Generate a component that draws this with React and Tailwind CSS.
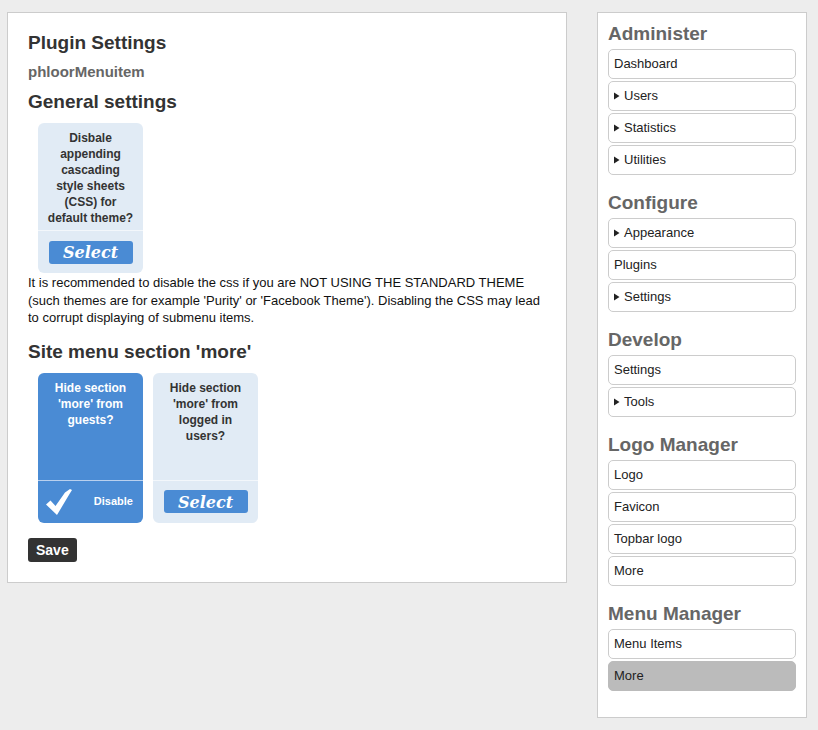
import React from "react";

const font = { fontFamily: '"Liberation Sans", Arial, sans-serif' };

function Tri() {
  return (
    <svg width="6" height="8" viewBox="0 0 6 8" className="mr-[4px] shrink-0">
      <path d="M0 0.5 L5.5 4 L0 7.5 Z" fill="#222" />
    </svg>
  );
}

function Check() {
  return (
    <svg width="26" height="26" viewBox="0 0 26 26">
      <path d="M0 15.5 L4.5 11.5 L9.5 17 L19 3.5 L24 0 L26 1 L23.5 5 L11 26 Z" fill="#fff" />
    </svg>
  );
}

function SelectBtn() {
  return (
    <div
      className="w-[84px] h-[23px] pt-[2px] rounded-[3px] bg-[#4a8bd4] flex items-center justify-center text-white text-[16px] font-bold italic leading-none"
      style={{ fontFamily: '"DejaVu Serif", Georgia, serif' }}
    >
      Select
    </div>
  );
}

function Card({ text, selected }) {
  return (
    <div
      className={
        "w-[105px] h-[150px] rounded-[6px] flex flex-col " +
        (selected ? "bg-[#4a8bd4] text-white" : "bg-[#e1ebf5] text-[#333]")
      }
    >
      <div className="h-[107px] px-[9px] pt-[7px] text-center text-[12px] font-bold leading-[16px]">
        {text}
      </div>
      <div
        className={
          "flex-1 border-t " +
          (selected ? "border-[#b9d0ee]" : "border-[#f3f7fb]")
        }
      >
        {selected ? (
          <div className="h-full flex items-center justify-between pl-[8px] pr-[10px]">
            <Check />
            <span className="text-[11px] font-bold">Disable</span>
          </div>
        ) : (
          <div className="h-full flex items-center justify-center">
            <SelectBtn />
          </div>
        )}
      </div>
    </div>
  );
}

function Item({ label, arrow, active }) {
  return (
    <div
      className={
        "h-[30px] rounded-[5px] border flex items-center pl-[5px] text-[13px] text-[#222] " +
        (active ? "bg-[#bbbbbb] border-[#bbbbbb]" : "bg-white border-[#cccccc]")
      }
    >
      {arrow && <Tri />}
      {label}
    </div>
  );
}

function Section({ title, items, first }) {
  return (
    <div className={first ? "" : "mt-[17px]"}>
      <div className="text-[19px] leading-[22px] font-bold text-[#666] mb-[4px]">{title}</div>
      <div className="flex flex-col gap-[2px]">
        {items.map((it, i) => (
          <Item key={i} {...it} />
        ))}
      </div>
    </div>
  );
}

export default function App() {
  return (
    <div className="min-h-[730px] bg-[#ededed] pl-[7px] pt-[12px] flex items-start gap-[30px]" style={font}>
      <div className="w-[560px] h-[571px] bg-white border border-[#cccccc] px-[20px] pt-[19px]">
        <h1 className="text-[19px] leading-[22px] font-bold text-[#333]">Plugin Settings</h1>
        <div className="mt-[9px] text-[15px] leading-[18px] font-bold text-[#666]">phloorMenuitem</div>
        <h2 className="mt-[10px] text-[19px] leading-[22px] font-bold text-[#333]">General settings</h2>
        <div className="mt-[10px] pl-[10px] flex gap-[10px]">
          <Card text="Disbale appending cascading style sheets (CSS) for default theme?" />
        </div>
        <p className="mt-[1px] text-[13px] leading-[17.5px] text-[#111]">
          It is recommended to disable the css if you are NOT USING THE STANDARD THEME (such themes are for example 'Purity' or 'Facebook Theme'). Disabling the CSS may lead to corrupt displaying of submenu items.
        </p>
        <h2 className="mt-[14px] text-[19px] leading-[22px] font-bold text-[#333]">Site menu section 'more'</h2>
        <div className="mt-[10px] pl-[10px] flex gap-[10px]">
          <Card text="Hide section 'more' from guests?" selected />
          <Card text="Hide section 'more' from logged in users?" />
        </div>
        <button className="mt-[15px] h-[24px] px-[8px] rounded-[3px] bg-[#333] text-white text-[14px] font-bold leading-none">
          Save
        </button>
      </div>
      <div className="w-[210px] bg-white border border-[#cccccc] px-[10px] pt-[10px] pb-[26px]">
        <Section
          first
          title="Administer"
          items={[
            { label: "Dashboard" },
            { label: "Users", arrow: true },
            { label: "Statistics", arrow: true },
            { label: "Utilities", arrow: true },
          ]}
        />
        <Section
          title="Configure"
          items={[
            { label: "Appearance", arrow: true },
            { label: "Plugins" },
            { label: "Settings", arrow: true },
          ]}
        />
        <Section
          title="Develop"
          items={[{ label: "Settings" }, { label: "Tools", arrow: true }]}
        />
        <Section
          title="Logo Manager"
          items={[{ label: "Logo" }, { label: "Favicon" }, { label: "Topbar logo" }, { label: "More" }]}
        />
        <Section
          title="Menu Manager"
          items={[{ label: "Menu Items" }, { label: "More", active: true }]}
        />
      </div>
    </div>
  );
}
